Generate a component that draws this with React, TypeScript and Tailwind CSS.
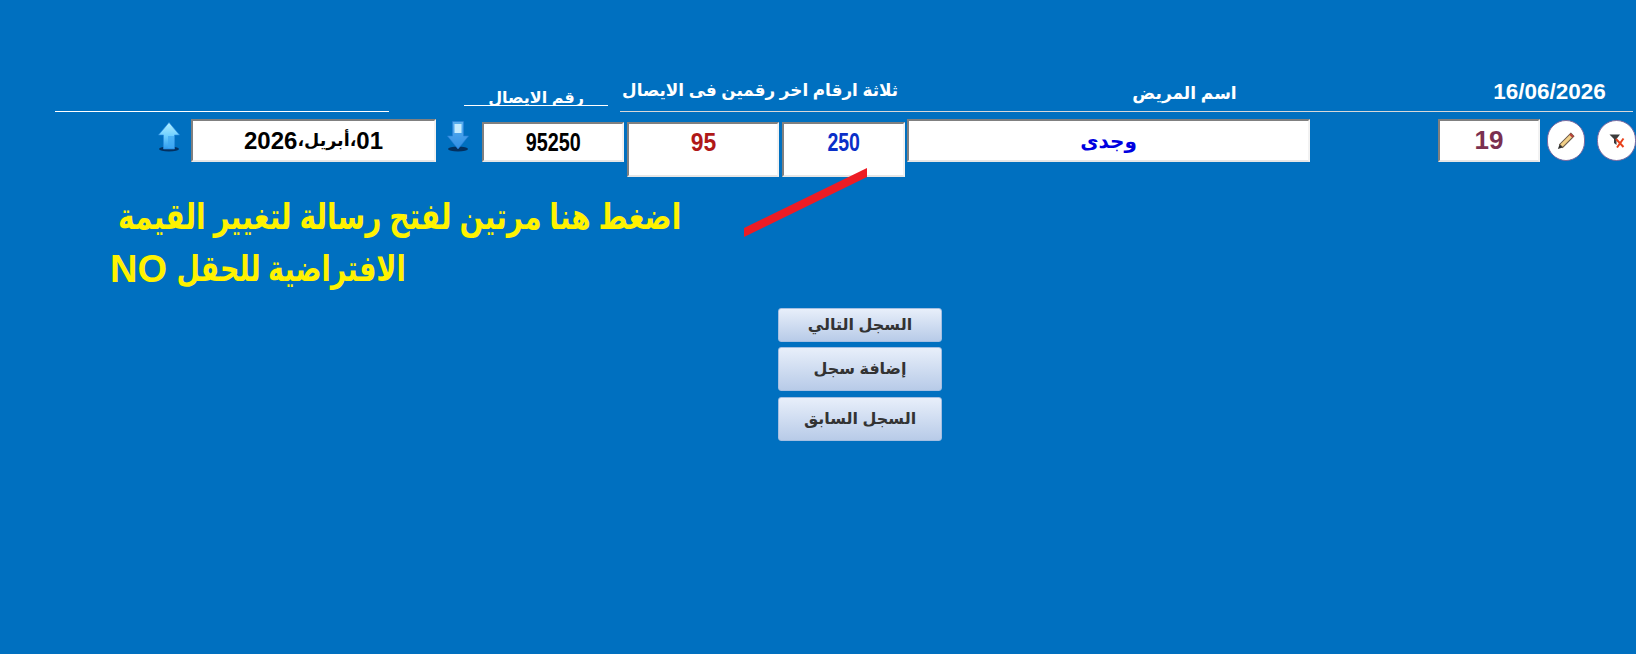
const FONT = "font-['Arial','Liberation_Sans','DejaVu_Sans',sans-serif]";

function UpArrow() {
  return (
    <svg width="22" height="30" viewBox="0 0 22 30">
      <defs>
        <linearGradient id="upg" x1="0" y1="0" x2="0" y2="1">
          <stop offset="0" stopColor="#b4f0ff" />
          <stop offset="0.5" stopColor="#6fd0ff" />
          <stop offset="1" stopColor="#2f9bee" />
        </linearGradient>
      </defs>
      <ellipse cx="11" cy="27" rx="10" ry="2.5" fill="#03305f" />
      <path d="M11 0.5 L21.5 13 L16.5 13 L16.5 27 L5.5 27 L5.5 13 L0.5 13 Z" fill="url(#upg)" stroke="#2a8be0" strokeWidth="0.6" />
      <rect x="10" y="14" width="6" height="12" fill="#3fa8f2" opacity="0.7" />
    </svg>
  );
}

function DownArrow() {
  return (
    <svg width="22" height="31" viewBox="0 0 22 31">
      <defs>
        <linearGradient id="dng" x1="0" y1="0" x2="0" y2="1">
          <stop offset="0" stopColor="#5ab0ee" />
          <stop offset="1" stopColor="#2f8ee6" />
        </linearGradient>
      </defs>
      <ellipse cx="11" cy="28" rx="10" ry="2.5" fill="#03305f" />
      <path d="M5.5 0.5 L16.5 0.5 L16.5 15 L21.5 15 L11 28 L0.5 15 L5.5 15 Z" fill="url(#dng)" stroke="#2a80d8" strokeWidth="0.6" />
      <rect x="7.5" y="3" width="7" height="9" fill="#c4ecff" />
    </svg>
  );
}

function Pencil() {
  return (
    <svg width="18" height="18" viewBox="0 0 16 16">
      <path d="M12.3 1 L15 3.7 L5 13.7 L2.3 11 Z" fill="#f2d088" stroke="#6a5a48" strokeWidth="0.9" />
      <path d="M12.3 1 L15 3.7 L13.6 5.1 L10.9 2.4 Z" fill="#b8403a" />
      <path d="M2.3 11 L5 13.7 L0.8 15.2 Z" fill="#2e2e2e" />
    </svg>
  );
}

function FilterX() {
  return (
    <svg width="16" height="14" viewBox="0 0 16 14">
      <path d="M0.5 0.5 L11 0.5 L7.5 5 L7.5 11 L5 9 L5 5 Z" fill="#3c3c3c" />
      <path d="M7 5 L14.5 13 M14.5 4.5 L8 13.5" stroke="#e8401a" strokeWidth="2" />
    </svg>
  );
}

const boxCls = "bg-white border-t-2 border-l-2 border-t-[#808080] border-l-[#808080] border-b-2 border-r-2 border-b-[#e6e6e6] border-r-[#f2f2f2] flex items-center justify-center font-bold";

export default function App() {
  return (
    <div dir="ltr" className={`${FONT} relative w-[1636px] h-[654px] bg-[#0070c0] overflow-hidden`}>
      <div className="flex items-end h-[112px] pl-[55px]">
        <div className="w-[334px] border-b border-white" />
        <div className="ml-[75px] mb-[6px] w-[144px] h-[24px] border-b border-white overflow-hidden flex justify-center">
          <span dir="rtl" className="text-white font-bold text-[16px] leading-[24px] whitespace-nowrap translate-y-[4px]">رقم الايصال</span>
        </div>
        <div className="ml-[12px] w-[1013px] h-[40px] border-b border-[#d8d8d8] flex items-start text-white font-bold">
          <span dir="rtl" className="w-[278px] text-[16.8px] leading-[24px] mt-[7px] whitespace-nowrap overflow-hidden text-right">ثلاثة ارقام اخر رقمين فى الايصال</span>
          <span dir="rtl" className="ml-[234px] w-[105px] text-[17px] leading-[24px] mt-[10px] whitespace-nowrap text-center">اسم المريض</span>
          <span className="ml-[256px] w-[113px] text-[22.5px] leading-[24px] mt-[8px] whitespace-nowrap text-center">16/06/2026</span>
        </div>
      </div>
      <div className="flex items-start pt-[7px] pl-[158px]">
        <div className="w-[22px] mt-[3px] flex justify-center"><UpArrow /></div>
        <div className={`${boxCls} ml-[11px] w-[245px] h-[43px] text-black`} dir="rtl">
          <span className="text-[24px]">01</span>
          <span className="text-[17.5px]">،أبريل،</span>
          <span className="text-[24px]">2026</span>
        </div>
        <div className="ml-[11px] w-[22px] mt-[2px] flex justify-center"><DownArrow /></div>
        <div className={`${boxCls} ml-[13px] mt-[3px] w-[142px] h-[40px] text-black`}>
          <span className="inline-block text-[26px] scale-x-[0.76]">95250</span>
        </div>
        <div className={`${boxCls} ml-[3px] mt-[3px] w-[152px] h-[55px] !items-start text-[#b01818]`}>
          <span className="inline-block text-[26px] leading-[36px] scale-x-[0.88]">95</span>
        </div>
        <div className={`${boxCls} ml-[3px] mt-[3px] w-[123px] h-[55px] !items-start text-[#0a2fc8]`}>
          <span className="inline-block text-[26px] leading-[36px] scale-x-[0.75]">250</span>
        </div>
        <div className={`${boxCls} ml-[2px] w-[403px] h-[43px] text-[#0000e0] text-[20px]`} dir="rtl">وجدى</div>
        <div className={`${boxCls} ml-[128px] w-[102px] h-[43px] text-[#7a3050] text-[26px]`}>19</div>
        <div className="ml-[7px] mt-[1px] w-[38px] h-[41px] rounded-full bg-white border border-[#7a6aa0] flex items-center justify-center"><Pencil /></div>
        <div className="ml-[12px] mt-[1px] w-[39px] h-[41px] rounded-full bg-white border border-[#7a6aa0] flex items-center justify-center"><FilterX /></div>
      </div>
      <div className="mt-[14px] ml-[90px] w-[600px] text-[#fff200] font-bold">
        <div dir="rtl" className="h-[52px] flex items-center pr-[9px] whitespace-nowrap">
          <span className="inline-block origin-right text-[36px] leading-[52px] scale-x-[0.78]">اضغط هنا مرتين لفتح رسالة لتغيير القيمة</span>
        </div>
        <div className="h-[52px] flex items-center pl-[20px]">
          <span className="w-[57px] text-[38px] leading-[52px]">NO</span>
          <span dir="rtl" className="ml-[13px] w-[226px] h-[52px] flex items-center whitespace-nowrap">
            <span className="inline-block origin-right text-[36px] leading-[52px] scale-x-[0.75]">الافتراضية للحقل</span>
          </span>
        </div>
      </div>
      <div className="mt-[13px] ml-[778px] w-[164px] flex flex-col gap-[5px]">
        {[["السجل التالي", "h-[34px]"], ["إضافة سجل", "h-[44px]"], ["السجل السابق", "h-[44px] mt-[1px]"]].map(([t, h]) => (
          <button key={t} dir="rtl" className={`${h} w-full rounded-[3px] border border-[#a4bfe2] bg-gradient-to-b from-[#e8effa] to-[#b8cbe8] text-[#333333] font-bold text-[16px]`}>{t}</button>
        ))}
      </div>
      <svg className="absolute left-[744px] top-[168px]" width="124" height="70" viewBox="0 0 124 70">
        <path d="M0 60 L123 0 L123 9 L0 69 Z" fill="#ed1c24" />
      </svg>
    </div>
  );
}
